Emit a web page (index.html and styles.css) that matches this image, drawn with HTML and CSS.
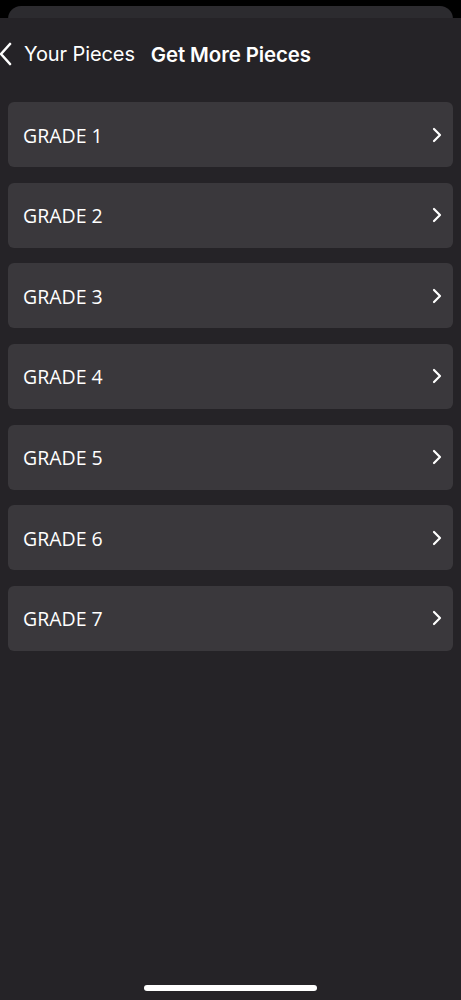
FILE: index.html
```html
<!DOCTYPE html>
<html>
<head>
<meta charset="utf-8">
<link rel="stylesheet" href="styles.css">
</head>
<body>
<div class="screen">
  <div class="back-card"></div>
  <div class="sheet">
    <header class="nav">
      <svg class="back-icon" width="14" height="24" viewBox="0 0 14 24"><path d="M11 2 L2 12 L11 22" fill="none" stroke="#fff" stroke-width="2.6" stroke-linecap="round" stroke-linejoin="round"/></svg>
      <span class="back-label">Your Pieces</span>
      <span class="title">Get More Pieces</span>
    </header>
    <ul class="list">
      <li class="row"><span>GRADE 1</span><svg class="chev" width="10" height="16" viewBox="0 0 10 16"><path d="M2 2 L8 8 L2 14" fill="none" stroke="#fff" stroke-width="2.2" stroke-linecap="round" stroke-linejoin="round"/></svg></li>
      <li class="row"><span>GRADE 2</span><svg class="chev" width="10" height="16" viewBox="0 0 10 16"><path d="M2 2 L8 8 L2 14" fill="none" stroke="#fff" stroke-width="2.2" stroke-linecap="round" stroke-linejoin="round"/></svg></li>
      <li class="row"><span>GRADE 3</span><svg class="chev" width="10" height="16" viewBox="0 0 10 16"><path d="M2 2 L8 8 L2 14" fill="none" stroke="#fff" stroke-width="2.2" stroke-linecap="round" stroke-linejoin="round"/></svg></li>
      <li class="row"><span>GRADE 4</span><svg class="chev" width="10" height="16" viewBox="0 0 10 16"><path d="M2 2 L8 8 L2 14" fill="none" stroke="#fff" stroke-width="2.2" stroke-linecap="round" stroke-linejoin="round"/></svg></li>
      <li class="row"><span>GRADE 5</span><svg class="chev" width="10" height="16" viewBox="0 0 10 16"><path d="M2 2 L8 8 L2 14" fill="none" stroke="#fff" stroke-width="2.2" stroke-linecap="round" stroke-linejoin="round"/></svg></li>
      <li class="row"><span>GRADE 6</span><svg class="chev" width="10" height="16" viewBox="0 0 10 16"><path d="M2 2 L8 8 L2 14" fill="none" stroke="#fff" stroke-width="2.2" stroke-linecap="round" stroke-linejoin="round"/></svg></li>
      <li class="row"><span>GRADE 7</span><svg class="chev" width="10" height="16" viewBox="0 0 10 16"><path d="M2 2 L8 8 L2 14" fill="none" stroke="#fff" stroke-width="2.2" stroke-linecap="round" stroke-linejoin="round"/></svg></li>
    </ul>
    <div class="home-bar"></div>
  </div>
</div>
</body>
</html>
```
FILE: styles.css
```css
html, body {
  margin: 0;
  padding: 0;
  background: #000;
}
.screen {
  width: 461px;
  height: 1000px;
  overflow: hidden;
  display: flex;
  flex-direction: column;
  background: #000;
}
.back-card {
  margin: 6px 8px 0 8px;
  height: 30px;
  flex-shrink: 0;
  background: #2c2b2f;
  border-radius: 13px 13px 0 0;
}
.sheet {
  margin-top: -18px;
  flex: 1;
  background: #252327;
  display: flex;
  flex-direction: column;
  position: relative;
}
.nav {
  height: 70px;
  display: flex;
  align-items: center;
  padding-top: 1px;
  font-family: Inter, "Liberation Sans", sans-serif;
  color: #fff;
}
.back-icon {
  margin-left: -1px;
  margin-right: 11px;
}
.back-label {
  font-size: 20px;
  font-weight: 400;
  margin-right: 16px;
  letter-spacing: -0.1px;
}
.title {
  font-size: 20.4px;
  font-weight: 600;
  letter-spacing: -0.1px;
}
.list {
  list-style: none;
  margin: 13px 0 0 0;
  padding: 0 8px;
  display: flex;
  flex-direction: column;
  gap: 15.67px;
}
.row {
  height: 65px;
  background: #3a383c;
  border-radius: 6px;
  display: flex;
  align-items: center;
  justify-content: space-between;
  padding: 0 11px 0 15px;
  font-family: "Open Sans", "Noto Sans", sans-serif;
  font-size: 19.5px;
  color: #fff;
}
.row span {
  padding-top: 1px;
}
.home-bar {
  position: absolute;
  left: 144px;
  bottom: 9px;
  width: 173px;
  height: 6px;
  border-radius: 3px;
  background: #fff;
}
```
